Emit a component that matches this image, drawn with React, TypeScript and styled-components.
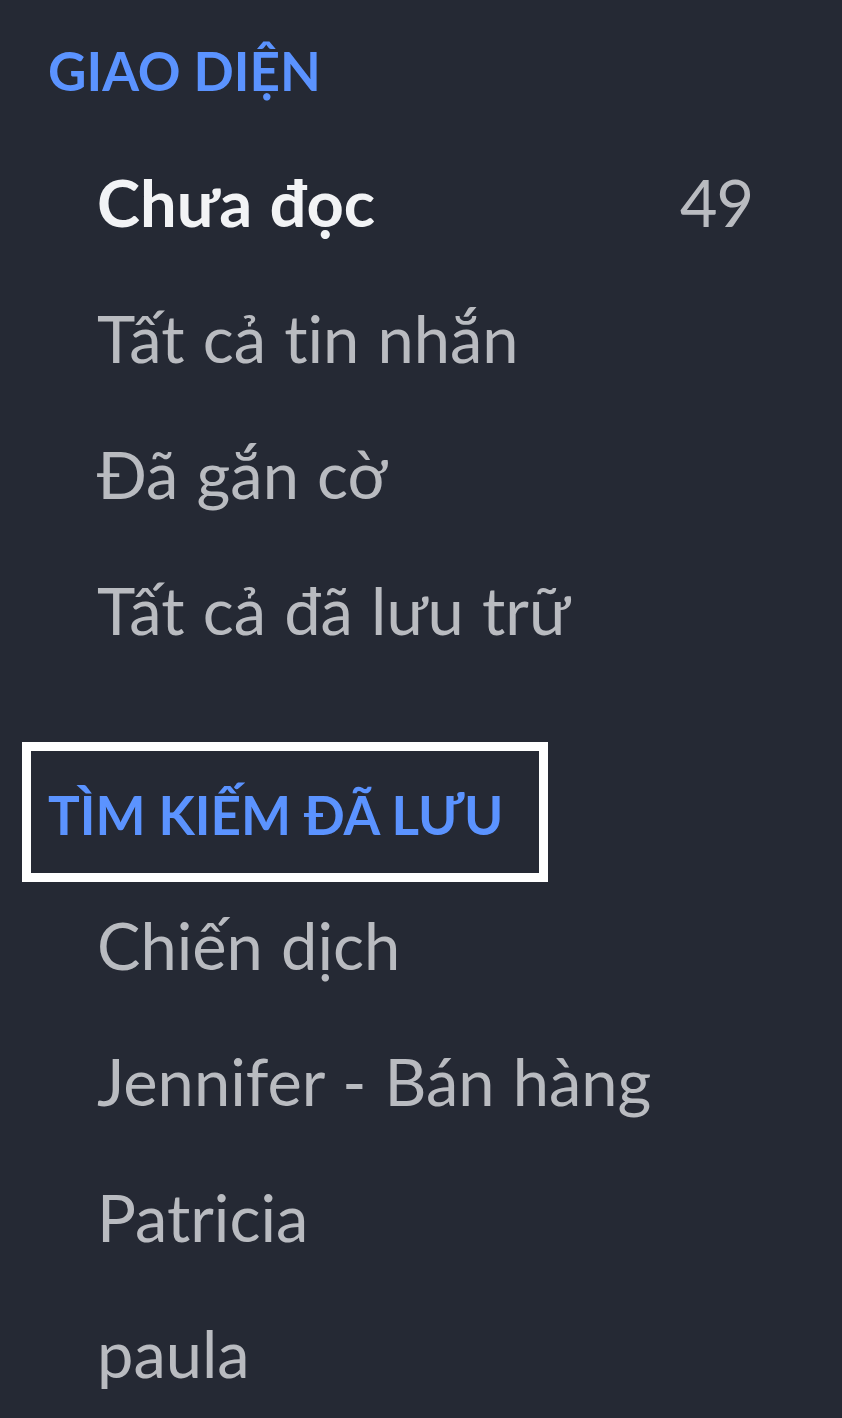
import React from "react";
import styled, { createGlobalStyle } from "styled-components";

const GlobalStyle = createGlobalStyle`
  html, body {
    margin: 0;
    padding: 0;
    background: #252934;
  }
  body {
    font-family: Lato, "Noto Sans", sans-serif;
    font-variant-ligatures: none;
  }
`;

type Item = { label: string; count?: number; active?: boolean };

const views: Item[] = [
  { label: "Chưa đọc", count: 49, active: true },
  { label: "Tất cả tin nhắn" },
  { label: "Đã gắn cờ" },
  { label: "Tất cả đã lưu trữ" },
];

const searches: Item[] = [
  { label: "Chiến dịch" },
  { label: "Jennifer - Bán hàng" },
  { label: "Patricia" },
  { label: "paula" },
];

const App: React.FunctionComponent = () => {
  return (
    <>
      <GlobalStyle />
      <Sidebar>
        <Section>
          <Heading>GIAO DIỆN</Heading>
          <List>
            {views.map((item, index) => (
              <Row key={index} $active={item.active}>
                <span>{item.label}</span>
                {item.count !== undefined && <Count>{item.count}</Count>}
              </Row>
            ))}
          </List>
        </Section>
        <Section $second>
          <Heading $highlighted>TÌM KIẾM ĐÃ LƯU</Heading>
          <List>
            {searches.map((item, index) => (
              <Row key={index}>
                <span>{item.label}</span>
              </Row>
            ))}
          </List>
        </Section>
      </Sidebar>
    </>
  );
};

export default App;

const Sidebar = styled.nav`
  width: 842px;
  min-height: 1418px;
  box-sizing: border-box;
  padding: 40px 0 0 48px;
  background: #252934;
`;

const Section = styled.section<{ $second?: boolean }>`
  display: flex;
  flex-direction: column;
  align-items: flex-start;
  margin-top: ${(p) => (p.$second ? "106px" : "0")};
`;

const Heading = styled.h2<{ $highlighted?: boolean }>`
  position: relative;
  margin: 0 0 32px;
  font-size: 53px;
  line-height: 62px;
  font-weight: 700;
  color: #5b93ff;

  ${(p) =>
    p.$highlighted &&
    `
    margin-bottom: 31px;
    &::after {
      content: "";
      position: absolute;
      top: -42px;
      bottom: -36px;
      left: -26px;
      right: -45px;
      border: 9px solid #ffffff;
    }
  `}
`;

const List = styled.ul`
  list-style: none;
  margin: 0;
  padding: 0;
  align-self: stretch;
`;

const Row = styled.li<{ $active?: boolean }>`
  display: flex;
  justify-content: space-between;
  align-items: center;
  height: 136px;
  line-height: 136px;
  padding: 0 89px 0 49px;
  font-size: 65px;
  word-spacing: 1.5px;
  font-weight: ${(p) => (p.$active ? 700 : 400)};
  color: ${(p) => (p.$active ? "#f2f3f5" : "#b9bbc0")};
  cursor: pointer;
`;

const Count = styled.span`
  font-weight: 400;
  font-variant-numeric: proportional-nums;
  color: #b9bbc0;
`;
